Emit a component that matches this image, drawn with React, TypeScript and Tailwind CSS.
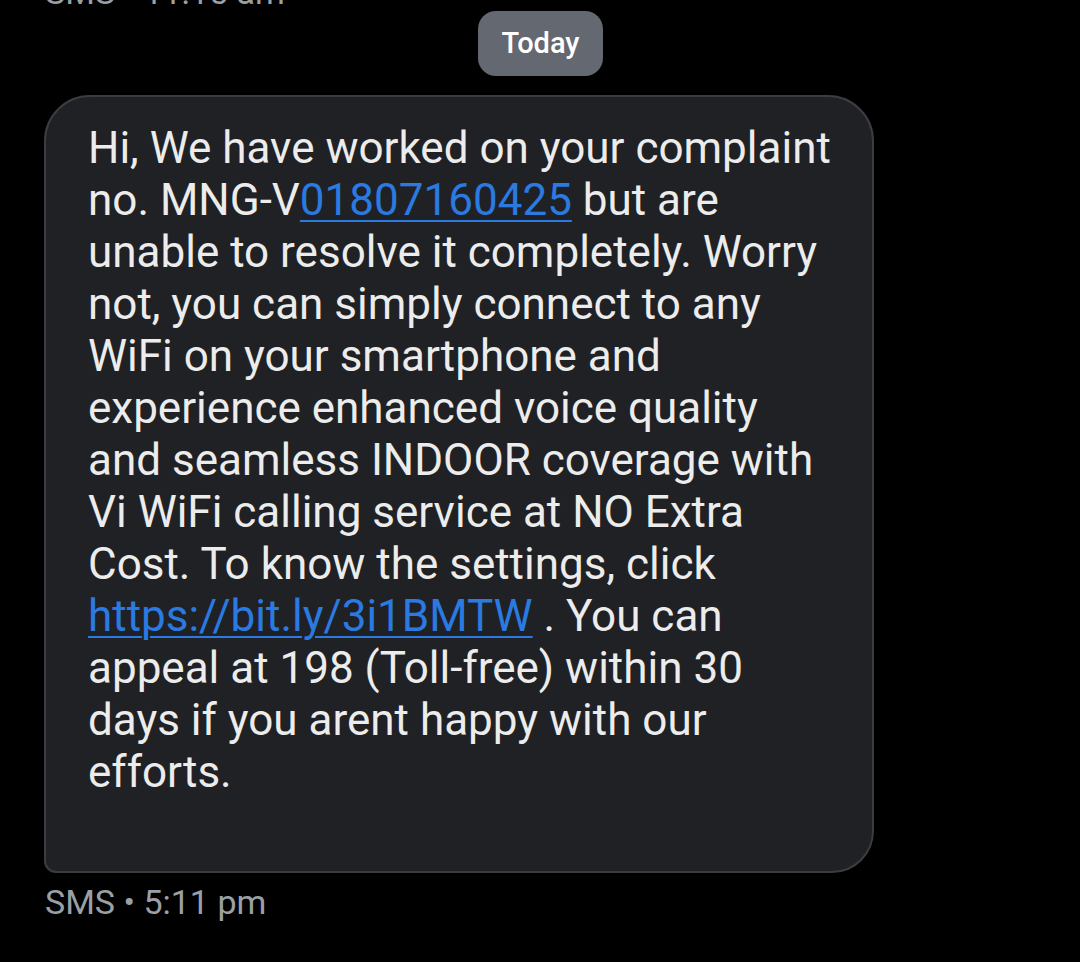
import React from "react";

const lines: React.ReactNode[] = [
  "Hi, We have worked on your complaint",
  <>
    no. MNG-V
    <span className="text-[#2a7ae2] underline decoration-2 underline-offset-[5px]">01807160425</span> but are
  </>,
  "unable to resolve it completely. Worry",
  "not, you can simply connect to any",
  "WiFi on your smartphone and",
  "experience enhanced voice quality",
  "and seamless INDOOR coverage with",
  "Vi WiFi calling service at NO Extra",
  "Cost. To know the settings, click",
  <>
    <span className="text-[#2a7ae2] underline decoration-2 underline-offset-[5px]">https://bit.ly/3i1BMTW</span> . You can
  </>,
  "appeal at 198 (Toll-free) within 30",
  "days if you arent happy with our",
  "efforts.",
];

export default function App() {
  return (
    <div className="w-[1080px] h-[962px] bg-black overflow-hidden font-['Roboto',sans-serif] flex flex-col">
      <div className="h-0 relative">
        <div className="absolute left-[45px] -top-[28px] text-[34px] leading-[40px] text-[#9aa0a6] whitespace-nowrap">SMS • 11:15 am</div>
      </div>

      <div className="flex justify-center pt-[11px] pl-[1px]">
        <div className="bg-[#646870] rounded-[18px] w-[125px] h-[65px] flex items-center justify-center text-white text-[29px] font-medium">
          Today
        </div>
      </div>

      <div className="pl-[44px] pt-[19px]">
        <div className="w-[830px] h-[778px] bg-[#202124] border-2 border-[#3c3d41] rounded-tl-[46px] rounded-tr-[46px] rounded-br-[42px] rounded-bl-[12px] pl-[42px] pt-[25px]">
          <div className="text-[44px] leading-[52px] text-[#ececec] whitespace-nowrap">
            {lines.map((l, i) => (
              <div key={i}>{l}</div>
            ))}
          </div>
        </div>
        <div className="mt-[9px] ml-[1px] text-[34px] leading-[40px] text-[#9aa0a6]">SMS • 5:11 pm</div>
      </div>
    </div>
  );
}
